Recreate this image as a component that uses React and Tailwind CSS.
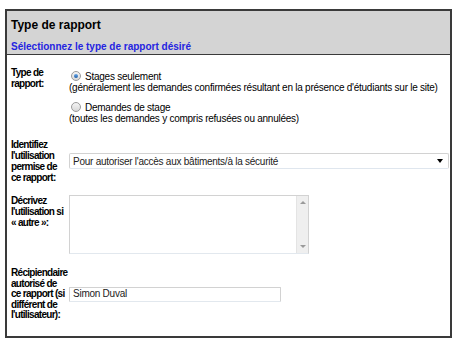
import React from "react";

function Radio({ checked }) {
  return (
    <span className="relative inline-block w-[10px] h-[10px] rounded-full border border-[#9a9a9a] bg-gradient-to-b from-[#f4f4f4] to-[#d8d8d8] shrink-0">
      {checked && (
        <span className="absolute left-[2px] top-[2px] w-[4px] h-[4px] rounded-full bg-gradient-to-b from-[#6aa8e8] to-[#1c5ea8]" />
      )}
    </span>
  );
}

const labelCls = "w-[58px] shrink-0 font-bold text-[10px] tracking-[-0.7px]";

export default function App() {
  return (
    <div
      className="pt-[9px] pl-[5px] text-black"
      style={{ fontFamily: '"Liberation Sans", Arial, sans-serif' }}
    >
      <div className="w-[447px] h-[329px] border-2 border-[#3a3a3a] bg-white flex flex-col">
        <div className="bg-[#d4d4d4] border-b border-[#3a3a3a] pl-[4px] pt-[7px] h-[44px]">
          <div className="text-[12px] leading-[14px] font-bold">Type de rapport</div>
          <div className="mt-[9px] text-[10px] leading-[12px] font-bold text-[#2424e0]">
            Sélectionnez le type de rapport désiré
          </div>
        </div>
        <div className="pl-[4px] pt-[12px] text-[10px] leading-[11px] tracking-[-0.25px]">
          {/* Row 1 */}
          <div className="flex">
            <div className={labelCls}>
              Type de
              <br />
              rapport:
            </div>
            <div className="pt-[3px]">
              <div className="flex items-center h-[12px] pl-[2px] gap-[4px]">
                <Radio checked />
                <span>Stages seulement</span>
              </div>
              <div className="leading-[11px] whitespace-nowrap">
                (généralement les demandes confirmées résultant en la présence d'étudiants sur le site)
              </div>
              <div className="flex items-center h-[12px] pl-[2px] gap-[4px] mt-[8px]">
                <Radio />
                <span>Demandes de stage</span>
              </div>
              <div className="leading-[11px]">
                (toutes les demandes y compris refusées ou annulées)
              </div>
            </div>
          </div>
          {/* Row 2 */}
          <div className="flex items-center mt-[15px]">
            <div className={labelCls}>
              Identifiez
              <br />
              l'utilisation
              <br />
              permise de
              <br />
              ce rapport:
            </div>
            <div className="w-[380px] h-[16px] border border-[#d2d2d2] border-b-[#dfe6ee] rounded-[2px] bg-white flex items-center justify-between pl-[3px] pr-[5px]">
              <span className="text-[#222]">Pour autoriser l'accès aux bâtiments/à la sécurité</span>
              <span className="w-0 h-0 border-l-[3px] border-r-[3px] border-t-[4px] border-l-transparent border-r-transparent border-t-black" />
            </div>
          </div>
          {/* Row 3 */}
          <div className="flex items-start mt-[12px]">
            <div className={labelCls}>
              Décrivez
              <br />
              l'utilisation si
              <br />« autre »:
            </div>
            <div className="w-[240px] h-[59px] border border-[#d2d2d2] border-b-[#e2e8ee] bg-white flex justify-end">
              <div className="w-[12px] h-full bg-[#efefef] border-l border-[#e4e4e4] flex flex-col items-center justify-between py-[5px]">
                <span className="w-0 h-0 border-l-[3px] border-r-[3px] border-b-[3px] border-l-transparent border-r-transparent border-b-[#9a9a9a]" />
                <span className="w-0 h-0 border-l-[3px] border-r-[3px] border-t-[3px] border-l-transparent border-r-transparent border-t-[#9a9a9a]" />
              </div>
            </div>
          </div>
          {/* Row 4 */}
          <div className="flex items-center mt-[14px] leading-[10.5px]">
            <div className={labelCls}>
              Récipiendaire
              <br />
              autorisé de
              <br />
              ce rapport (si
              <br />
              différent de
              <br />
              l'utilisateur):
            </div>
            <div className="w-[212px] h-[15px] border border-[#d2d2d2] border-b-[#e2e8ee] rounded-[1px] bg-white flex items-center pl-[3px] text-[#222]">
              Simon Duval
            </div>
          </div>
        </div>
      </div>
    </div>
  );
}
